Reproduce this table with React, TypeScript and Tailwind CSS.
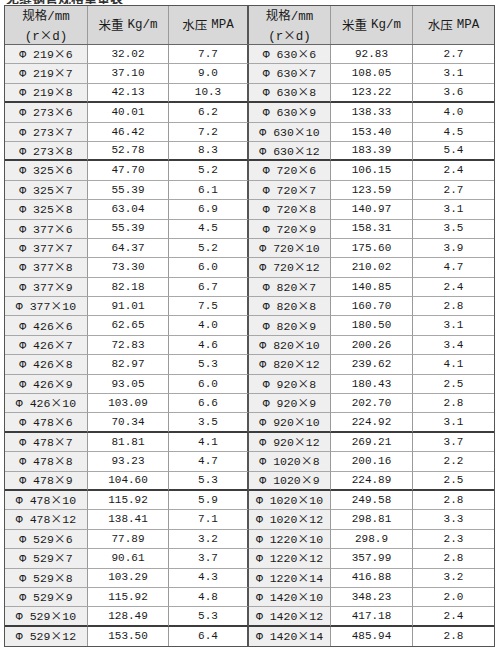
import React from 'react';

type Row = [string, string, string, string];

const left: Row[] = [
  ['219', '6', '32.02', '7.7'],
  ['219', '7', '37.10', '9.0'],
  ['219', '8', '42.13', '10.3'],
  ['273', '6', '40.01', '6.2'],
  ['273', '7', '46.42', '7.2'],
  ['273', '8', '52.78', '8.3'],
  ['325', '6', '47.70', '5.2'],
  ['325', '7', '55.39', '6.1'],
  ['325', '8', '63.04', '6.9'],
  ['377', '6', '55.39', '4.5'],
  ['377', '7', '64.37', '5.2'],
  ['377', '8', '73.30', '6.0'],
  ['377', '9', '82.18', '6.7'],
  ['377', '10', '91.01', '7.5'],
  ['426', '6', '62.65', '4.0'],
  ['426', '7', '72.83', '4.6'],
  ['426', '8', '82.97', '5.3'],
  ['426', '9', '93.05', '6.0'],
  ['426', '10', '103.09', '6.6'],
  ['478', '6', '70.34', '3.5'],
  ['478', '7', '81.81', '4.1'],
  ['478', '8', '93.23', '4.7'],
  ['478', '9', '104.60', '5.3'],
  ['478', '10', '115.92', '5.9'],
  ['478', '12', '138.41', '7.1'],
  ['529', '6', '77.89', '3.2'],
  ['529', '7', '90.61', '3.7'],
  ['529', '8', '103.29', '4.3'],
  ['529', '9', '115.92', '4.8'],
  ['529', '10', '128.49', '5.3'],
  ['529', '12', '153.50', '6.4'],
];

const right: Row[] = [
  ['630', '6', '92.83', '2.7'],
  ['630', '7', '108.05', '3.1'],
  ['630', '8', '123.22', '3.6'],
  ['630', '9', '138.33', '4.0'],
  ['630', '10', '153.40', '4.5'],
  ['630', '12', '183.39', '5.4'],
  ['720', '6', '106.15', '2.4'],
  ['720', '7', '123.59', '2.7'],
  ['720', '8', '140.97', '3.1'],
  ['720', '9', '158.31', '3.5'],
  ['720', '10', '175.60', '3.9'],
  ['720', '12', '210.02', '4.7'],
  ['820', '7', '140.85', '2.4'],
  ['820', '8', '160.70', '2.8'],
  ['820', '9', '180.50', '3.1'],
  ['820', '10', '200.26', '3.4'],
  ['820', '12', '239.62', '4.1'],
  ['920', '8', '180.43', '2.5'],
  ['920', '9', '202.70', '2.8'],
  ['920', '10', '224.92', '3.1'],
  ['920', '12', '269.21', '3.7'],
  ['1020', '8', '200.16', '2.2'],
  ['1020', '9', '224.89', '2.5'],
  ['1020', '10', '249.58', '2.8'],
  ['1020', '12', '298.81', '3.3'],
  ['1220', '10', '298.9', '2.3'],
  ['1220', '12', '357.99', '2.8'],
  ['1220', '14', '416.88', '3.2'],
  ['1420', '10', '348.23', '2.0'],
  ['1420', '12', '417.18', '2.4'],
  ['1420', '14', '485.94', '2.8'],
];

// rows after which the scan shows a heavier rule
const heavy = [2, 5, 19, 22, 29];

const mono = "font-['Liberation_Mono','Noto_Sans_CJK_SC',monospace]";
const cjk = "font-['Noto_Sans_CJK_SC','Liberation_Sans',sans-serif]";

const Spec = ({ d, t }: { d: string; t: string }) => (
  <span className={`${mono} whitespace-nowrap`}>
    Φ {d}
    <span className={`${cjk} inline-block w-[12px] text-center`}>×</span>
    {t}
  </span>
);

const Header = ({ last }: { last?: boolean }) => (
  <>
    <div className="flex flex-col items-center justify-center pt-[2px] bg-[#d8d8d8] border-r border-[#9a9a9a] text-[12.5px] leading-[17px]">
      <span>
        <span className={cjk}>规格</span>
        <span className={mono}>/mm</span>
      </span>
      <span className={mono}>
        (r<span className={cjk}>×</span>d)
      </span>
    </div>
    <div className="flex items-center justify-center bg-[#d8d8d8] border-r border-[#9a9a9a] text-[12.5px]">
      <span className={cjk}>米重</span>
      <span className={`${mono} ml-1`}>Kg/m</span>
    </div>
    <div
      className={`flex items-center justify-center bg-[#d8d8d8] text-[12.5px] ${
        last ? '' : 'border-r-2 border-[#555]'
      }`}
    >
      <span className={cjk}>水压</span>
      <span className={`${mono} ml-1`}>MPA</span>
    </div>
  </>
);

const Cells = ({ r, i, last }: { r: Row; i: number; last?: boolean }) => {
  const rule = heavy.includes(i)
    ? 'border-b-2 border-b-[#3c3c3c]'
    : i === 30
    ? ''
    : 'border-b border-b-[#a8a8a8]';
  return (
    <>
      <div className={`flex items-center justify-center bg-[#efefef] border-r border-r-[#9a9a9a] text-[11.5px] ${rule}`}>
        <Spec d={r[0]} t={r[1]} />
      </div>
      <div className={`flex items-center justify-center bg-white border-r border-r-[#9a9a9a] text-[11px] ${mono} ${rule}`}>
        {r[2]}
      </div>
      <div
        className={`flex items-center justify-center bg-white text-[11px] ${mono} ${rule} ${
          last ? '' : 'border-r-2 border-r-[#555]'
        }`}
      >
        {r[3]}
      </div>
    </>
  );
};

export default function App() {
  return (
    <div className="w-[500px] h-[653px] bg-white text-[#1a1a1a] overflow-hidden">
      <div className="h-[4px] mb-[1px] overflow-hidden pl-[6px]">
        <div className={`${cjk} text-[13px] font-bold leading-[13px] -mt-[9px] h-[13px] text-[#333]`}>
          无缝钢管规格重量表
        </div>
      </div>
      <div className="ml-[4px] w-[491px] border border-[#555]">
        <div className="grid grid-cols-[83px_81px_80px_82px_82px_81px] grid-rows-[38px] border-b border-[#666]">
          <Header />
          <Header last />
        </div>
        <div className="grid grid-cols-[83px_81px_80px_82px_82px_81px] auto-rows-[19.4px]">
          {left.map((r, i) => (
            <React.Fragment key={i}>
              <Cells r={r} i={i} />
              <Cells r={right[i]} i={i} last />
            </React.Fragment>
          ))}
        </div>
      </div>
    </div>
  );
}
